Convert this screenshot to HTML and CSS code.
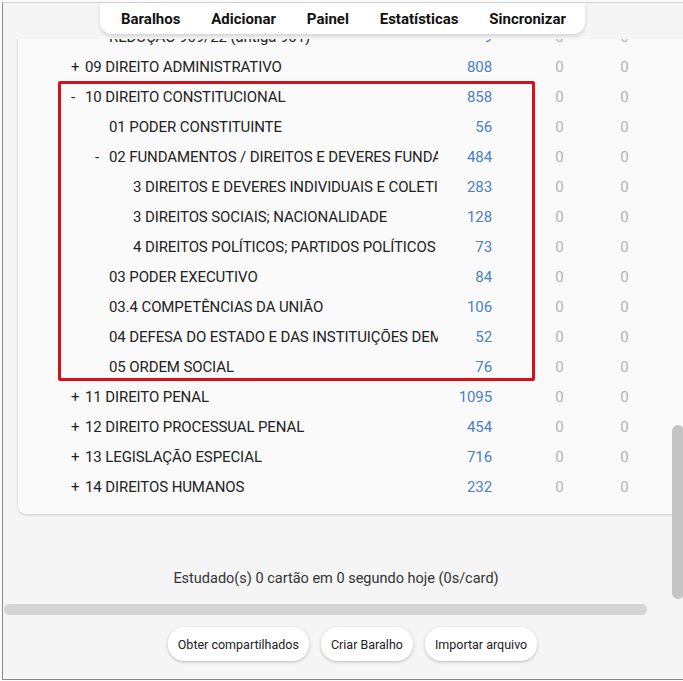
FILE: index.html
```html
<!DOCTYPE html>
<html lang="pt">
<head>
  <meta charset="UTF-8" />
  <title>Baralhos</title>
  <link rel="stylesheet" href="styles.css">
</head>
<body>
  <div class="window">
    <div class="header">
      <nav class="toolbar">
        <span>Baralhos</span>
        <span>Adicionar</span>
        <span>Painel</span>
        <span>Estatísticas</span>
        <span>Sincronizar</span>
      </nav>
    </div>

    <div class="deck-card">
      <div class="row lvl2"><div class="name"><span class="col"></span>REDUÇÃO 909/22 (antiga 901)</div><div class="due">9</div><div class="zero">0</div><div class="zero">0</div></div>
      <div class="row lvl1"><div class="name"><span class="col">+</span>09 DIREITO ADMINISTRATIVO</div><div class="due">808</div><div class="zero">0</div><div class="zero">0</div></div>
      <div class="row lvl1"><div class="name"><span class="col">-</span>10 DIREITO CONSTITUCIONAL</div><div class="due">858</div><div class="zero">0</div><div class="zero">0</div></div>
      <div class="row lvl2"><div class="name"><span class="col"></span>01 PODER CONSTITUINTE</div><div class="due">56</div><div class="zero">0</div><div class="zero">0</div></div>
      <div class="row lvl2"><div class="name"><span class="col">-</span>02 FUNDAMENTOS / DIREITOS E DEVERES FUNDAMENTAIS</div><div class="due">484</div><div class="zero">0</div><div class="zero">0</div></div>
      <div class="row lvl3"><div class="name"><span class="col"></span>3 DIREITOS E DEVERES INDIVIDUAIS E COLETIVOS</div><div class="due">283</div><div class="zero">0</div><div class="zero">0</div></div>
      <div class="row lvl3"><div class="name"><span class="col"></span>3 DIREITOS SOCIAIS; NACIONALIDADE</div><div class="due">128</div><div class="zero">0</div><div class="zero">0</div></div>
      <div class="row lvl3"><div class="name"><span class="col"></span>4 DIREITOS POLÍTICOS; PARTIDOS POLÍTICOS</div><div class="due">73</div><div class="zero">0</div><div class="zero">0</div></div>
      <div class="row lvl2"><div class="name"><span class="col"></span>03 PODER EXECUTIVO</div><div class="due">84</div><div class="zero">0</div><div class="zero">0</div></div>
      <div class="row lvl2"><div class="name"><span class="col"></span>03.4 COMPETÊNCIAS DA UNIÃO</div><div class="due">106</div><div class="zero">0</div><div class="zero">0</div></div>
      <div class="row lvl2"><div class="name"><span class="col"></span>04 DEFESA DO ESTADO E DAS INSTITUIÇÕES DEMOCRÁTICAS</div><div class="due">52</div><div class="zero">0</div><div class="zero">0</div></div>
      <div class="row lvl2"><div class="name"><span class="col"></span>05 ORDEM SOCIAL</div><div class="due">76</div><div class="zero">0</div><div class="zero">0</div></div>
      <div class="row lvl1"><div class="name"><span class="col">+</span>11 DIREITO PENAL</div><div class="due">1095</div><div class="zero">0</div><div class="zero">0</div></div>
      <div class="row lvl1"><div class="name"><span class="col">+</span>12 DIREITO PROCESSUAL PENAL</div><div class="due">454</div><div class="zero">0</div><div class="zero">0</div></div>
      <div class="row lvl1"><div class="name"><span class="col">+</span>13 LEGISLAÇÃO ESPECIAL</div><div class="due">716</div><div class="zero">0</div><div class="zero">0</div></div>
      <div class="row lvl1"><div class="name"><span class="col">+</span>14 DIREITOS HUMANOS</div><div class="due">232</div><div class="zero">0</div><div class="zero">0</div></div>
    </div>

    <p class="studied">Estudado(s) 0 cartão em 0 segundo hoje (0s/card)</p>

    <div class="bottom-bar">
      <button>Obter compartilhados</button>
      <button>Criar Baralho</button>
      <button>Importar arquivo</button>
    </div>

    <div class="highlight-box"></div>
    <div class="vscroll"></div>
    <div class="hscroll"></div>
  </div>
</body>
</html>
```

FILE: styles.css
```css
* {
  margin: 0;
  padding: 0;
  box-sizing: border-box;
}

body {
  background: #fbfbfb;
  font-family: Roboto, "Open Sans", sans-serif;
  padding-top: 2px;
}

.window {
  position: relative;
  width: 681px;
  height: 678px;
  margin-left: 2px;
  border-top: 1px solid #d0d0d0;
  border-left: 1px solid #8a8a8a;
  border-bottom: 1px solid #8a8a8a;
  background-color: #f5f5f5;
  overflow: hidden;
  display: flex;
  flex-direction: column;
}

/* top strip that hides the scrolled rows */
.header {
  position: absolute;
  top: 0;
  left: 0;
  right: 0;
  height: 36px;
  background-color: #f5f5f5;
  z-index: 2;
}

.toolbar {
  margin-left: 97px;
  width: 485px;
  height: 31px;
  display: flex;
  align-items: center;
  justify-content: space-between;
  padding: 0 19px 0 21px;
  background-color: #ffffff;
  border-radius: 0 0 12px 12px;
  box-shadow: 0 2px 4px rgba(0, 0, 0, 0.15);
  font-size: 15px;
  font-weight: bold;
  color: #111;
}

.deck-card {
  width: 720px;
  margin: 7px 0 0 15px;
  padding: 12px 0 12px 45px;
  background-color: #fafafa;
  border-radius: 8px;
  box-shadow: 0 1px 3px rgba(0, 0, 0, 0.18);
}

.row {
  display: flex;
  align-items: center;
  height: 30px;
  font-size: 15px;
  letter-spacing: -0.1px;
}

.name {
  width: 375px;
  overflow: hidden;
  white-space: nowrap;
  color: #222;
}

.lvl1 .name { padding-left: 8px; }
.lvl2 .name { padding-left: 32px; }
.lvl3 .name { padding-left: 56px; }

.col {
  display: inline-block;
  width: 14px;
}

.due {
  width: 54px;
  text-align: right;
  color: #4a7fc6;
}

.zero {
  width: 65px;
  text-align: center;
  color: #b4b4b4;
}

.due + .zero {
  margin-left: 35px;
}

.studied {
  margin-top: 56px;
  text-align: center;
  font-size: 14.5px;
  color: #333;
  padding-right: 14px;
}

.bottom-bar {
  margin-top: 40px;
  display: flex;
  justify-content: center;
  gap: 12px;
  padding-left: 19px;
}

.bottom-bar button {
  height: 34px;
  padding: 0 10px;
  border: none;
  border-radius: 16px;
  background-color: #ffffff;
  box-shadow: 0 1px 3px rgba(0, 0, 0, 0.25);
  font-family: Roboto, sans-serif;
  font-size: 12.5px;
  color: #222;
}

.highlight-box {
  position: absolute;
  left: 55px;
  top: 78px;
  width: 477px;
  height: 300px;
  border: 3px solid #d5121b;
  border-radius: 2px;
}

.vscroll {
  position: absolute;
  left: 669px;
  top: 422px;
  width: 12px;
  height: 174px;
  border-radius: 6px;
  background-color: #c4c4c4;
}

.hscroll {
  position: absolute;
  left: 1px;
  top: 601px;
  width: 643px;
  height: 11px;
  border-radius: 6px;
  background-color: #d4d4d4;
}
```
